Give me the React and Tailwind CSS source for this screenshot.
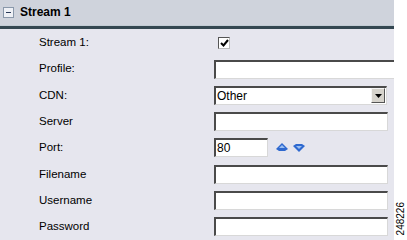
import React from "react";

const font = { fontFamily: '"Liberation Sans", Arial, sans-serif' };

function Field({ className = "w-[174px]", children }) {
  return (
    <div
      className={`h-[19px] shrink-0 bg-white border-t-2 border-l-2 border-t-[#4a4a4a] border-l-[#4a4a4a] border-r border-b border-r-[#d8d8d8] border-b-[#d8d8d8] flex items-center pl-[1px] text-[12px] text-black ${className}`}
    >
      {children}
    </div>
  );
}

function Row({ label, children }) {
  return (
    <div className="h-[26.3px] flex items-center">
      <div className="w-[214px] shrink-0 pl-[39px] text-[11.5px] text-black">{label}</div>
      {children}
    </div>
  );
}

function Spin() {
  return (
    <div className="flex items-center gap-[5px] ml-[8px]">
      <svg width="12" height="9" viewBox="0 0 12 9">
        <path d="M6 0 L12 6 L9 8 L3 8 L0 6 Z" fill="#2f69cf" />
        <path d="M6 2 L9 5 L3 5 Z" fill="#9cc0f2" />
      </svg>
      <svg width="12" height="9" viewBox="0 0 12 9">
        <path d="M3 1 L9 1 L12 3 L6 9 L0 3 Z" fill="#2f69cf" />
        <path d="M3 3 L9 3 L6 6 Z" fill="#9cc0f2" />
      </svg>
    </div>
  );
}

export default function App() {
  return (
    <div className="w-[407px] h-[240px] bg-white flex overflow-hidden" style={font}>
      <div className="w-[394px] h-full flex flex-col bg-[#e6e6ee] overflow-hidden">
        <div className="h-[27px] bg-[#cfd3dc] flex items-center gap-[6px] pl-[3px] border-b border-b-[#c3ccd4]">
          <div className="w-[11px] h-[11px] border border-[#8a98aa] bg-[#eef0f5] flex items-center justify-center">
            <div className="w-[5px] h-[1px] bg-[#2a3a5a]" />
          </div>
          <span className="text-[12px] font-bold text-black">Stream 1</span>
        </div>
        <div className="h-[3px] bg-[#344751]" />
        <div className="flex flex-col pt-[1px]">
          <Row label="Stream 1:">
            <div className="ml-[4px] w-[12px] h-[12px] bg-white border border-t-[#555] border-l-[#555] border-r-[#bbb] border-b-[#bbb] flex items-center justify-center">
              <svg width="9" height="8" viewBox="0 0 9 8">
                <path d="M1 4 L3.5 6.5 L8 1" stroke="#000" strokeWidth="2" fill="none" />
              </svg>
            </div>
          </Row>
          <Row label="Profile:">
            <Field className="w-[190px] border-r-0" />
          </Row>
          <Row label="CDN:">
            <Field className="w-[173px] justify-between pr-[1px]">
              <span>Other</span>
              <div className="w-[14px] h-[15px] bg-[#d6d3cc] border border-t-[#f5f5f5] border-l-[#f5f5f5] border-r-[#555] border-b-[#555] flex items-center justify-center">
                <svg width="7" height="4" viewBox="0 0 7 4">
                  <path d="M0 0 L7 0 L3.5 4 Z" fill="#000" />
                </svg>
              </div>
            </Field>
          </Row>
          <Row label="Server">
            <Field />
          </Row>
          <Row label="Port:">
            <Field className="w-[54px]">80</Field>
            <Spin />
          </Row>
          <Row label="Filename">
            <Field />
          </Row>
          <Row label="Username">
            <Field />
          </Row>
          <Row label="Password">
            <Field />
          </Row>
        </div>
      </div>
      <div className="flex-1 flex flex-col justify-end items-center pb-[5px]">
        <span className="text-[10px] text-black [writing-mode:vertical-rl] rotate-180 leading-none">248226</span>
      </div>
    </div>
  );
}
